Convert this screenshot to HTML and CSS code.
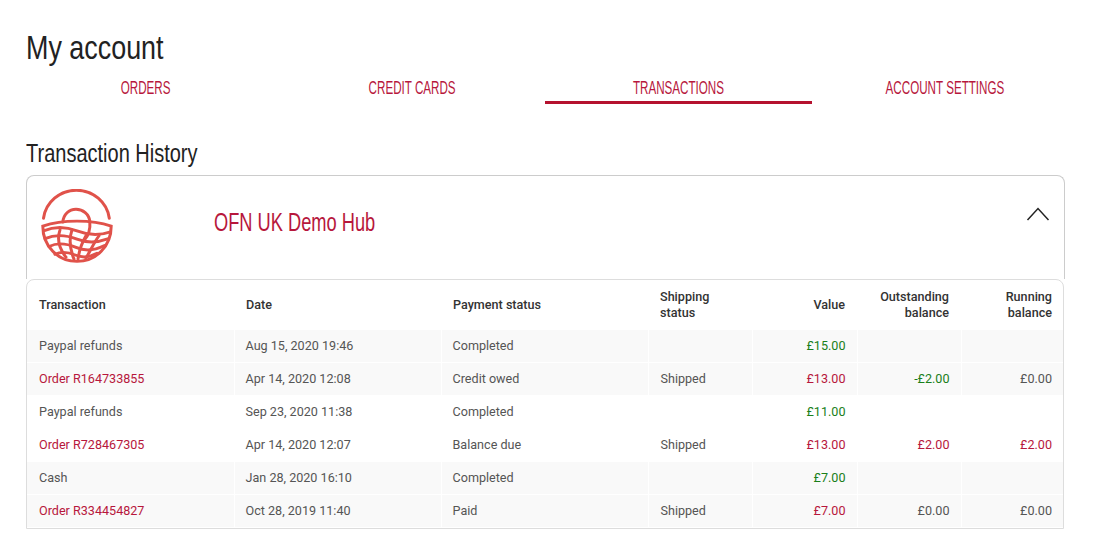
FILE: index.html
```html
<!DOCTYPE html>
<html lang="en">
<head>
<meta charset="utf-8">
<title>My account</title>
<link rel="stylesheet" href="styles.css">
</head>
<body>
<main class="page">
  <h1 class="title"><span class="cond">My account</span></h1>
  <nav class="tabs">
    <a class="tab"><span class="tab-label">ORDERS</span></a>
    <a class="tab"><span class="tab-label">CREDIT CARDS</span></a>
    <a class="tab active"><span class="tab-label">TRANSACTIONS</span></a>
    <a class="tab"><span class="tab-label">ACCOUNT SETTINGS</span></a>
  </nav>
  <h2 class="section"><span class="cond">Transaction History</span></h2>
  <section class="panel">
    <svg class="logo" viewBox="0 0 72 77" width="72" height="75" preserveAspectRatio="none" fill="none" stroke="#e0524a" stroke-linecap="round">
      <path d="M2.500 30 A33.200 33.200 0 0 1 68.300 30" stroke-width="3"/>
      <path d="M21.800 34 C22.500 26 28 20.800 35 20.800 C42 20.800 48 26 48.800 33 C49.500 41 48.500 47 43 53" stroke-width="3"/>
      <path d="M1.800 38 C12 34.500 24 33 36 33 C48 33 60 34.500 70.200 38 C70.200 59 55 74.300 36 74.300 C17 74.300 1.800 59 1.800 38 Z" stroke-width="3"/>
      <path d="M2.500 43 C14 38 26 39 36 43 C46 47 58 48 69.500 44" stroke-width="3"/>
      <path d="M4 51 C14 46.500 26 47.500 36 51.500 C46 55.500 57 55 67.500 51" stroke-width="3"/>
      <path d="M8 59 C16 55 26 56 35 60 C44 64 54 63 63.500 58" stroke-width="3"/>
      <path d="M14 67 C20 64 28 65 35 68 C42 71 49 70 56 66" stroke-width="3"/>
      <path d="M19 42 C16 51 18 61 25 70 M31 42 C28 51 29 62 33 72 M45 48 C41 55 38 64 37 72 M58 48 C53 55 49 64 45 71" stroke-width="3"/>
    </svg>
    <h3 class="hub"><span class="cond">OFN UK Demo Hub</span></h3>
    <svg class="chevron" viewBox="0 0 24 14" width="24" height="14" fill="none" stroke="#222" stroke-width="1.500"><path d="M1.500 13 L12 1.500 L22.500 13"/></svg>
  </section>
  <section class="table-card">
    <table class="ledger">
      <colgroup>
        <col class="c-wide"><col class="c-wide"><col class="c-wide"><col class="c-narrow"><col class="c-narrow"><col class="c-mid"><col class="c-last">
      </colgroup>
      <thead>
        <tr>
          <th>Transaction</th><th>Date</th><th>Payment status</th><th>Shipping<br>status</th>
          <th class="num">Value</th><th class="num">Outstanding<br>balance</th><th class="num">Running<br>balance</th>
        </tr>
      </thead>
      <tbody>
        <tr class="shade"><td>Paypal refunds</td><td>Aug 15, 2020 19:46</td><td>Completed</td><td></td><td class="num pos">£15.00</td><td></td><td></td></tr>
        <tr class="shade"><td class="neg">Order R164733855</td><td>Apr 14, 2020 12:08</td><td>Credit owed</td><td>Shipped</td><td class="num neg">£13.00</td><td class="num pos">-£2.00</td><td class="num">£0.00</td></tr>
        <tr><td>Paypal refunds</td><td>Sep 23, 2020 11:38</td><td>Completed</td><td></td><td class="num pos">£11.00</td><td></td><td></td></tr>
        <tr><td class="neg">Order R728467305</td><td>Apr 14, 2020 12:07</td><td>Balance due</td><td>Shipped</td><td class="num neg">£13.00</td><td class="num neg">£2.00</td><td class="num neg">£2.00</td></tr>
        <tr class="shade"><td>Cash</td><td>Jan 28, 2020 16:10</td><td>Completed</td><td></td><td class="num pos">£7.00</td><td></td><td></td></tr>
        <tr class="shade"><td class="neg">Order R334454827</td><td>Oct 28, 2019 11:40</td><td>Paid</td><td>Shipped</td><td class="num neg">£7.00</td><td class="num">£0.00</td><td class="num">£0.00</td></tr>
      </tbody>
    </table>
  </section>
</main>
</body>
</html>
```
FILE: styles.css
```css
* { box-sizing: border-box; }
html, body { margin: 0; background: #fff; }
body { font-family: Roboto, "Liberation Sans", sans-serif; color: #444; }
.page { padding: 0 28px 0 26px; }
.cond {
  display: inline-block;
  transform-origin: left center;
  white-space: nowrap;
}
.title {
  margin: 0;
  padding-top: 29px;
  height: 74px;
  font-family: "Liberation Sans", sans-serif;
  font-size: 33px;
  line-height: 38px;
  font-weight: 400;
  color: #222;
}
.title .cond { transform: scaleX(0.815); }
.tabs {
  display: grid;
  grid-template-columns: repeat(4, 266.5px);
  margin: 0 -15px 0 -14px;
  height: 31px;
}
.tab {
  display: block;
  text-align: center;
  height: 30px;
  color: #b7173c;
  font-family: "Liberation Sans", sans-serif;
  font-size: 19px;
  line-height: 28px;
}
.tab-label {
  display: inline-block;
  white-space: nowrap;
  transform: scaleX(0.612);
}
.tab.active { border-bottom: 3px solid #b5122f; }
.section {
  margin: 0;
  padding-top: 33px;
  height: 70px;
  font-family: "Liberation Sans", sans-serif;
  font-size: 25px;
  line-height: 30px;
  font-weight: 400;
  color: #222;
}
.section .cond { transform: scaleX(0.8); }
.panel {
  display: flex;
  align-items: flex-start;
  height: 104px;
  padding: 13px 15px 0 14px;
  border: 1px solid #ccc;
  border-bottom: 0;
  border-radius: 8px 8px 0 0;
}
.logo { flex: none; }
.hub {
  margin: 0 0 0 101px;
  padding-top: 18px;
  font-family: "Liberation Sans", sans-serif;
  font-size: 25px;
  line-height: 30px;
  font-weight: 400;
  color: #b7173c;
}
.hub .cond { transform: scaleX(0.73); }
.chevron { margin: 18px -1px 0 auto; }
.table-card {
  margin: 0 1px 0 0;
  padding-bottom: 1px;
  border: 1px solid #ddd;
  border-radius: 8px 8px 0 0;
  background: #fff;
}
.ledger {
  width: 100%;
  table-layout: fixed;
  border-collapse: collapse;
  font-size: 12.600px;
}
.c-wide { width: 207px; }
.c-narrow { width: 104.500px; }
.c-mid { width: 104px; }
.ledger th {
  height: 49px;
  padding: 2px 12px 0;
  text-align: left;
  font-weight: 500;
  line-height: 16px;
  color: #333;
}
.ledger td {
  height: 33px;
  padding: 0 11px;
  line-height: 16px;
  border-top: 1px solid #fff;
  border-left: 1px solid #fff;
  color: #555;
}
.ledger td:first-child { border-left: 0; padding-left: 12px; }
.ledger td:nth-child(4) { padding-left: 12px; }
.ledger th:last-child { padding-right: 11px; }
.ledger .num { text-align: right; }
.shade td { background: #f9f9f9; }
.ledger .pos { color: #1a7f1a; }
.ledger .neg { color: #b7173c; }
```
